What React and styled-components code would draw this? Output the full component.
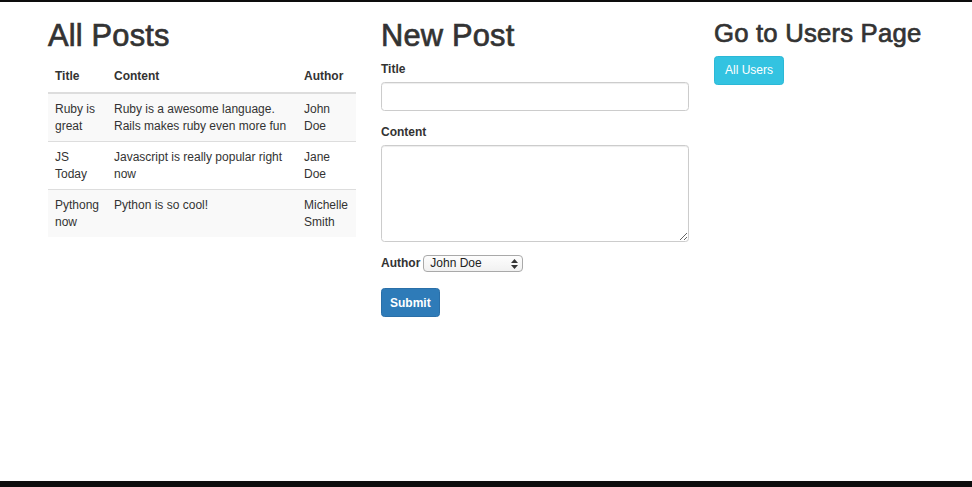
import React from "react";
import styled, { createGlobalStyle } from "styled-components";

const GlobalStyle = createGlobalStyle`
  html, body {
    margin: 0;
    padding: 0;
    background: #fff;
  }
  body {
    font-family: "Liberation Sans", Arial, sans-serif;
    font-size: 12px;
    line-height: 1.42857;
    color: #333;
  }
  * {
    box-sizing: border-box;
  }
`;

const Page = styled.div`
  min-height: 100vh;
  border-top: 2px solid #0d0d0d;
  border-bottom: 6px solid #0d0d0d;
`;

const Container = styled.div`
  display: grid;
  grid-template-columns: 308px 308px 1fr;
  column-gap: 25px;
  padding-left: 48px;
`;

const Column = styled.div`
  display: flex;
  flex-direction: column;
  align-items: flex-start;
`;

const Heading = styled.h1`
  font-family: "Liberation Sans", Arial, sans-serif;
  font-weight: normal;
  font-size: ${(p) => (p.$small ? "25.7px" : "30.8px")};
  line-height: 1.1;
  color: #333;
  -webkit-text-stroke: 0.7px #333;
  letter-spacing: 0.2px;
  margin: 17px 0 8.6px;
`;

const Table = styled.table`
  width: 308px;
  border-collapse: collapse;
  border-spacing: 0;
  table-layout: fixed;
`;

const Th = styled.th`
  text-align: left;
  font-weight: bold;
  vertical-align: bottom;
  padding: 7px;
  line-height: 17px;
  border-bottom: 2px solid #ddd;
  width: ${(p) => p.$w}px;
`;

const Row = styled.tr`
  background: ${(p) => (p.$striped ? "#f9f9f9" : "#fff")};
`;

const Td = styled.td`
  padding: 7px 7px 6px;
  line-height: 17px;
  vertical-align: top;
  border-top: 1px solid #ddd;
`;

const Form = styled.form`
  display: flex;
  flex-direction: column;
  width: 308px;
`;

const Group = styled.div`
  display: flex;
  flex-direction: column;
  margin-bottom: 13px;
`;

const InlineGroup = styled.div`
  display: flex;
  align-items: center;
  gap: 3px;
  margin-bottom: 16px;
`;

const Label = styled.label`
  font-weight: bold;
  line-height: 17px;
  margin-bottom: ${(p) => (p.$inline ? "0" : "4px")};
`;

const Input = styled.input`
  height: 29px;
  width: 100%;
  border: 1px solid #ccc;
  border-radius: 3.5px;
  box-shadow: inset 0 1px 1px rgba(0, 0, 0, 0.075);
  padding: 5px 10px;
  font: inherit;
`;

const TextArea = styled.textarea`
  height: 97px;
  width: 100%;
  border: 1px solid #ccc;
  border-radius: 3.5px;
  box-shadow: inset 0 1px 1px rgba(0, 0, 0, 0.075);
  padding: 5px 10px;
  font: inherit;
`;

const SelectWrap = styled.span`
  position: relative;
  display: inline-flex;
`;

const Select = styled.select`
  appearance: none;
  -webkit-appearance: none;
  width: 100px;
  height: 17px;
  border: 1px solid #a9a9a9;
  border-radius: 4px;
  background: linear-gradient(#fdfdfd, #f1f1f1);
  font-family: "Liberation Sans", Arial, sans-serif;
  font-size: 12px;
  color: #222;
  padding: 0 0 0 6px;
  line-height: 15px;
`;

const Arrows = styled.svg`
  position: absolute;
  right: 5px;
  top: 4px;
  pointer-events: none;
`;

const Button = styled.button`
  height: 29px;
  padding: 0 ${(p) => (p.$info ? "10px" : "8px")};
  border: 1px solid ${(p) => (p.$info ? "#2bb8d6" : "#2a6fa8")};
  border-radius: 3.5px;
  background: ${(p) => (p.$info ? "#33c3e1" : "#2e7bb8")};
  color: #fff;
  font-family: "Liberation Sans", Arial, sans-serif;
  font-size: 12px;
  font-weight: ${(p) => (p.$info ? "normal" : "bold")};
  align-self: flex-start;
`;

const posts = [
  { title: "Ruby is great", content: "Ruby is a awesome language. Rails makes ruby even more fun", author: "John Doe" },
  { title: "JS Today", content: "Javascript is really popular right now", author: "Jane Doe" },
  { title: "Pythong now", content: "Python is so cool!", author: "Michelle Smith" },
];

function App() {
  return (
    <Page>
      <GlobalStyle />
      <Container>
        <Column>
          <Heading>All Posts</Heading>
          <Table>
            <thead>
              <tr>
                <Th $w={59}>Title</Th>
                <Th $w={190}>Content</Th>
                <Th $w={59}>Author</Th>
              </tr>
            </thead>
            <tbody>
              {posts.map((p, i) => (
                <Row key={p.title} $striped={i % 2 === 0}>
                  <Td>{p.title}</Td>
                  <Td>{p.content}</Td>
                  <Td>{p.author}</Td>
                </Row>
              ))}
            </tbody>
          </Table>
        </Column>

        <Column>
          <Heading>New Post</Heading>
          <Form onSubmit={(e) => e.preventDefault()}>
            <Group>
              <Label>Title</Label>
              <Input type="text" />
            </Group>
            <Group>
              <Label>Content</Label>
              <TextArea />
            </Group>
            <InlineGroup>
              <Label $inline>Author</Label>
              <SelectWrap>
                <Select defaultValue="John Doe">
                  <option>John Doe</option>
                  <option>Jane Doe</option>
                  <option>Michelle Smith</option>
                </Select>
                <Arrows width="7" height="10" viewBox="0 0 7 10">
                  <path d="M3.5 0 L7 4 H0 Z" fill="#333" />
                  <path d="M3.5 10 L7 6 H0 Z" fill="#333" />
                </Arrows>
              </SelectWrap>
            </InlineGroup>
            <Button type="submit">Submit</Button>
          </Form>
        </Column>

        <Column>
          <Heading as="h2" $small>Go to Users Page</Heading>
          <Button $info type="button">All Users</Button>
        </Column>
      </Container>
    </Page>
  );
}

export default App;
